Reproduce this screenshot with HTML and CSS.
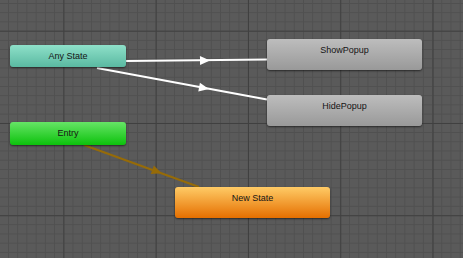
FILE: index.html
```html
<!DOCTYPE html>
<html>
<head>
<meta charset="utf-8">
<link rel="stylesheet" href="styles.css">
</head>
<body>
<div class="canvas">
  <svg class="edges" width="463" height="258" viewBox="0 0 463 258">
    <line x1="126" y1="61" x2="267" y2="59.5" class="edge-white"/>
    <polygon points="-5,-4.5 5,0 -5,4.5" class="arrow-white" transform="translate(205,60.5) rotate(-0.6)"/>
    <line x1="97" y1="68" x2="267" y2="99.5" class="edge-white"/>
    <polygon points="-5,-4.5 5,0 -5,4.5" class="arrow-white" transform="translate(204,88) rotate(10.4)"/>
    <line x1="84" y1="145" x2="199" y2="187" class="edge-brown"/>
    <polygon points="-5,-4.5 5,0 -5,4.5" class="arrow-brown" transform="translate(157,171.5) rotate(20.1)"/>
  </svg>
  <div class="node node-any">Any State</div>
  <div class="node node-entry">Entry</div>
  <div class="node node-state node-show">ShowPopup</div>
  <div class="node node-state node-hide">HidePopup</div>
  <div class="node node-state node-new">New State</div>
</div>
</body>
</html>
```
FILE: styles.css
```css
html, body {
  margin: 0;
  padding: 0;
}
body {
  width: 463px;
  height: 258px;
  overflow: hidden;
  font-family: "Liberation Sans", Arial, sans-serif;
}
.canvas {
  position: relative;
  width: 463px;
  height: 258px;
  background-color: #5a5a5a;
  background-image:
    linear-gradient(#404040 1px, transparent 1px),
    linear-gradient(90deg, #404040 1px, transparent 1px),
    linear-gradient(#505050 1px, transparent 1px),
    linear-gradient(90deg, #505050 1px, transparent 1px);
  background-size: 92.3px 92.3px, 92.3px 92.3px, 9.23px 9.23px, 9.23px 9.23px;
  background-position: 0 30.7px, 63.4px 0, 0 3.0px, 8.0px 0;
}
.edges {
  position: absolute;
  left: 0;
  top: 0;
}
.edge-white {
  stroke: #ffffff;
  stroke-width: 2;
}
.arrow-white {
  fill: #ffffff;
}
.edge-brown {
  stroke: #966b08;
  stroke-width: 2.2;
}
.arrow-brown {
  fill: #966b08;
}
.node {
  position: absolute;
  box-sizing: border-box;
  border-radius: 3px;
  font-size: 9px;
  color: #141414;
  text-align: center;
  box-shadow: 0 1px 2px rgba(0, 0, 0, 0.55);
}
.node-any {
  left: 10px;
  top: 45px;
  width: 116px;
  height: 22px;
  line-height: 22px;
  background: linear-gradient(#8ee0c9, #5ab9a1);
}
.node-entry {
  left: 10px;
  top: 122px;
  width: 116px;
  height: 23px;
  line-height: 23px;
  background: linear-gradient(#66e466, #0cc20c);
}
.node-state {
  width: 155px;
  height: 31px;
  line-height: 22px;
}
.node-show {
  left: 267px;
  top: 39px;
  background: linear-gradient(#bdbdbd, #999999);
}
.node-hide {
  left: 267px;
  top: 95px;
  background: linear-gradient(#bdbdbd, #999999);
}
.node-new {
  left: 175px;
  top: 187px;
  background: linear-gradient(#ffcb66, #e56f00);
}
```
